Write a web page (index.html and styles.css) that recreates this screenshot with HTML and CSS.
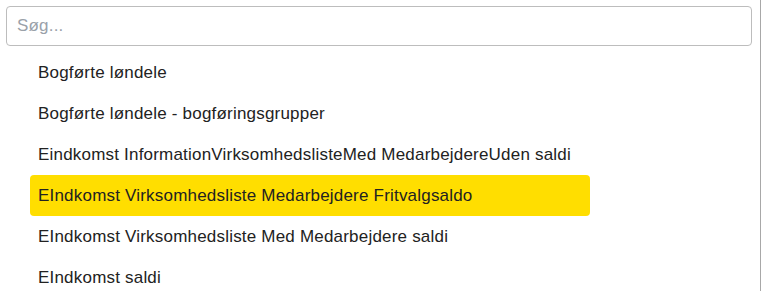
FILE: index.html
```html
<!DOCTYPE html>
<html lang="da">
<head>
<meta charset="utf-8">
<link rel="stylesheet" href="styles.css">
</head>
<body>
<div class="panel">
  <div class="search-wrap">
    <input class="search" type="text" placeholder="Søg...">
  </div>
  <ul class="list">
    <li class="item">Bogførte løndele</li>
    <li class="item">Bogførte løndele - bogføringsgrupper</li>
    <li class="item">Eindkomst InformationVirksomhedslisteMed MedarbejdereUden saldi</li>
    <li class="item active">EIndkomst Virksomhedsliste Medarbejdere Fritvalgsaldo</li>
    <li class="item">EIndkomst Virksomhedsliste Med Medarbejdere saldi</li>
    <li class="item">EIndkomst saldi</li>
  </ul>
</div>
</body>
</html>
```
FILE: styles.css
```css
html, body {
  margin: 0;
  padding: 0;
  background: #fff;
}
body {
  font-family: "Liberation Sans", Arial, sans-serif;
  color: #222;
  overflow: hidden;
}
.panel {
  width: 760px;
  height: 291px;
  border-right: 1px solid #a8a8a8;
  overflow: hidden;
}
.search-wrap {
  padding: 6px 8px 0 6px;
}
.search {
  box-sizing: border-box;
  display: block;
  width: 746px;
  height: 40px;
  margin: 0;
  padding: 0 10px;
  border: 1px solid #bdbdbd;
  border-radius: 4px;
  font-family: inherit;
  font-size: 17px;
  letter-spacing: 0.2px;
  color: #222;
  outline: none;
}
.search::placeholder {
  color: #9aa1a9;
}
.list {
  list-style: none;
  margin: 6px 0 0 30px;
  padding: 0;
}
.item {
  box-sizing: border-box;
  width: 560px;
  height: 41px;
  line-height: 41px;
  padding-left: 8px;
  font-size: 17px;
  letter-spacing: 0.2px;
  white-space: nowrap;
  border-radius: 4px;
}
.item.active {
  background: #ffde00;
}
```
